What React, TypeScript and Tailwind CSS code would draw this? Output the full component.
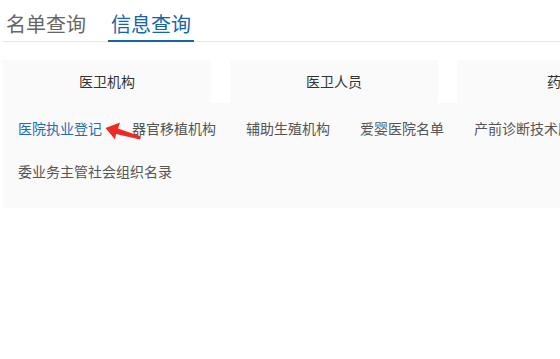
import React from 'react'

const font = { fontFamily: '"Noto Sans CJK SC", "Liberation Sans", sans-serif' }

const tabs = ['医卫机构', '医卫人员', '药品']
const row1 = ['医院执业登记', '器官移植机构', '辅助生殖机构', '爱婴医院名单', '产前诊断技术服务机构']
const row2 = ['委业务主管社会组织名录']

function Arrow() {
  return (
    <svg className="absolute left-[100px] top-[118px]" width="48" height="26" viewBox="0 0 48 26">
      {/* red pointer, tip at left */}
      <polygon points="5.5,10 20,4.5 18,10.5 41,18.5 40,21.5 16,16 15,21.5" fill="#ee2a24" />
    </svg>
  )
}

export default function App() {
  return (
    <div className="w-[560px] h-[359px] bg-white overflow-hidden relative" style={font}>
      {/* Top tabs */}
      <div className="flex pl-[3px] border-b border-[#e8e8e8] h-[42px] w-[557px] ml-[3px]">
        <div className="px-[3px] pt-[8px] text-[20px] leading-[32px] text-[#666] -ml-[3px]">名单查询</div>
        <div className="ml-[19px] px-[3px] pt-[8px] text-[20px] leading-[32px] text-[#1565ad] border-b-2 border-[#1565ad] h-[42px]">信息查询</div>
      </div>

      {/* Panel */}
      <div className="ml-[3px] mt-[18px] w-[1000px] bg-[#fafafa]">
        <div className="flex gap-[19px] bg-white">
          {tabs.map(t => (
            <div key={t} className="w-[208px] h-[43px] shrink-0 bg-[#fafafa] flex items-center justify-center text-[14px] text-[#333]">
              {t}
            </div>
          ))}
        </div>
        <div className="pt-[4px] pb-[15px] pl-[15px]">
          <div className="flex h-[43px] items-center">
            {row1.map((t, i) => (
              <div key={t} className={`mr-[30px] shrink-0 text-[14px] ${i === 0 ? 'text-[#1e6cb4]' : 'text-[#555]'}`}>{t}</div>
            ))}
          </div>
          <div className="flex h-[43px] items-center">
            {row2.map(t => (
              <div key={t} className="mr-[30px] shrink-0 text-[14px] text-[#555]">{t}</div>
            ))}
          </div>
        </div>
      </div>
      <Arrow />
    </div>
  )
}
